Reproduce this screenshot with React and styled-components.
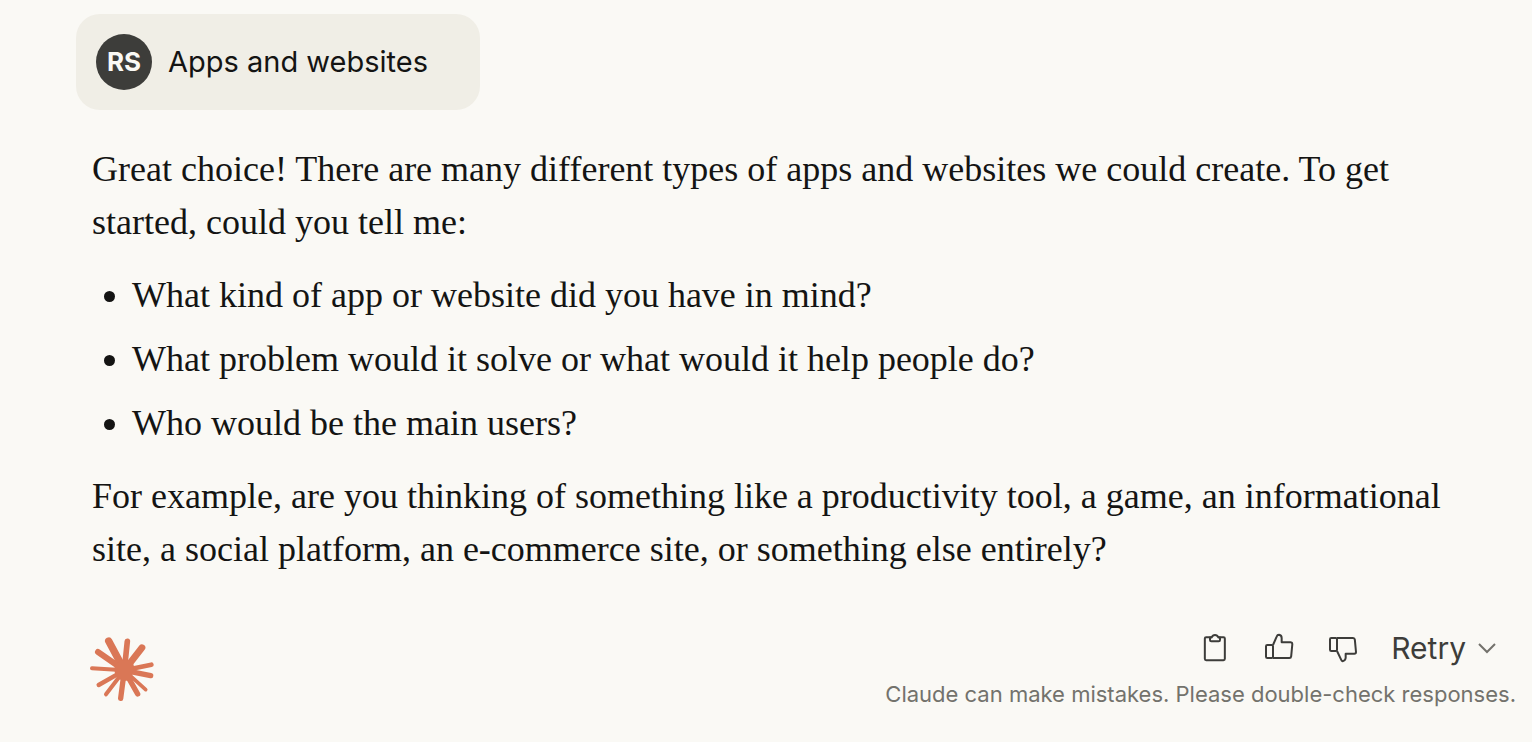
import React from "react";
import styled, { createGlobalStyle } from "styled-components";

const questions = [
  "What kind of app or website did you have in mind?",
  "What problem would it solve or what would it help people do?",
  "Who would be the main users?",
];

// tips of the logo rays, with the thickness of each ray
const rays = [
  { x: 86, y: 44, width: 22 },
  { x: 142, y: 45, width: 17 },
  { x: 186, y: 64, width: 20 },
  { x: 214, y: 115, width: 14 },
  { x: 212, y: 148, width: 16 },
  { x: 197, y: 190, width: 11 },
  { x: 173, y: 203, width: 16 },
  { x: 122, y: 216, width: 16 },
  { x: 78, y: 204, width: 12 },
  { x: 56, y: 176, width: 13 },
  { x: 36, y: 126, width: 12 },
  { x: 54, y: 77, width: 18 },
];

function Logo() {
  return (
    <LogoSvg viewBox="30 32 192 192" aria-hidden="true">
      {rays.map((ray) => (
        <line
          key={`${ray.x}-${ray.y}`}
          x1="133"
          y1="132"
          x2={ray.x}
          y2={ray.y}
          strokeWidth={ray.width}
        />
      ))}
      <path
        d="M122 102 L134 104 L156 102 L162 120 L158 140 L154 162 L130 164 L112 156 L104 138 L104 118 Z"
        fill="#da7756"
        stroke="none"
      />
    </LogoSvg>
  );
}

export default function App() {
  return (
    <Page>
      <GlobalStyle />
      <Prompt>
        <Avatar>RS</Avatar>
        <span>Apps and websites</span>
      </Prompt>
      <Answer>
        <p>
          Great choice! There are many different types of apps and websites we
          could create. To get started, could you tell me:
        </p>
        <ul>
          {questions.map((question) => (
            <li key={question}>{question}</li>
          ))}
        </ul>
        <p>
          For example, are you thinking of something like a productivity tool, a
          game, an informational site, a social platform, an e-commerce site, or
          something else entirely?
        </p>
      </Answer>
      <Footer>
        <Logo />
        <FooterRight>
          <Actions>
            <IconButton type="button" aria-label="Copy">
              <svg viewBox="30 36 96 96">
                <rect x="47.5" y="51.5" width="60" height="69" rx="4" />
                <path
                  d="M63 52.5 V60 Q63 64 67 64 H89 Q93 64 93 60 V52.5 H88 Q85 45 78 45 Q71 45 68 52.5 Z"
                  fill="#faf9f5"
                />
              </svg>
            </IconButton>
            <IconButton type="button" aria-label="Good response">
              <svg viewBox="222 36 96 96">
                <rect x="231" y="75" width="21" height="39" rx="4" />
                <path d="M252 75 L263 50 Q265 44.5 270 44.5 Q278 46 278 54 V66.5 H305 Q310 67 310 72 L306.500 109 Q306 114 301 114 H252" />
              </svg>
            </IconButton>
            <IconButton type="button" aria-label="Bad response">
              <svg viewBox="54 36 96 96">
                <rect x="63" y="54" width="21" height="39" rx="4" />
                <path d="M84 54 H132 Q137 54 137.500 59 L141 96 Q141 101 136 101 H110 V114 Q109 122 101 123.500 Q98 123 96 118 L84 93" />
              </svg>
            </IconButton>
            <RetryButton type="button">
              Retry
              <svg viewBox="0 0 18 18">
                <path d="M1 5 L9 13 L17 5" />
              </svg>
            </RetryButton>
          </Actions>
          <Disclaimer>
            Claude can make mistakes. Please double-check responses.
          </Disclaimer>
        </FooterRight>
      </Footer>
    </Page>
  );
}

const GlobalStyle = createGlobalStyle`
  * {
    box-sizing: border-box;
  }
  body {
    margin: 0;
    background: #faf9f5;
    color: #141413;
    font-family: Inter, "Liberation Sans", sans-serif;
  }
`;

const Page = styled.main`
  padding: 14px 16px 32px 76px;
`;

const Prompt = styled.div`
  display: flex;
  align-items: center;
  gap: 16px;
  width: fit-content;
  padding: 20px 52px 20px 20px;
  border-radius: 24px;
  background: #f0eee6;
  font-size: 29px;
  line-height: 56px;
`;

const Avatar = styled.span`
  display: flex;
  align-items: center;
  justify-content: center;
  width: 56px;
  height: 56px;
  border-radius: 50%;
  background: #3d3d3a;
  color: #faf9f5;
  font-size: 26px;
  font-weight: 700;
`;

const Answer = styled.div`
  display: flex;
  flex-direction: column;
  gap: 20px;
  padding: 33px 64px 0 16px;
  font-family: "Liberation Serif", serif;
  font-size: 36px;
  line-height: 53px;
  p {
    margin: 0;
  }
  ul {
    display: flex;
    flex-direction: column;
    gap: 11px;
    margin: 0;
    padding-left: 40px;
  }
`;

const Footer = styled.footer`
  display: flex;
  align-items: center;
  justify-content: space-between;
  margin-top: 54px;
  padding-left: 14px;
`;

const LogoSvg = styled.svg`
  width: 64px;
  height: 64px;
  stroke: #da7756;
  stroke-linecap: round;
`;

const FooterRight = styled.div`
  display: flex;
  flex-direction: column;
  align-items: flex-end;
  gap: 14px;
`;

const Actions = styled.div`
  display: flex;
  align-items: center;
  gap: 32px;
  padding-right: 20px;
`;

const IconButton = styled.button`
  width: 32px;
  height: 32px;
  padding: 0;
  border: 0;
  background: none;
  cursor: pointer;
  svg {
    display: block;
    fill: none;
    stroke: #3d3d3a;
    stroke-width: 6;
    stroke-linejoin: round;
  }
`;

const RetryButton = styled.button`
  display: flex;
  align-items: center;
  gap: 12px;
  padding: 0;
  border: 0;
  background: none;
  color: #3d3d3a;
  font-family: inherit;
  font-size: 30px;
  line-height: 36px;
  cursor: pointer;
  svg {
    width: 18px;
    height: 18px;
    fill: none;
    stroke: #73726c;
    stroke-width: 2;
  }
`;

const Disclaimer = styled.p`
  margin: 0;
  color: #73726c;
  font-size: 22px;
  line-height: 28px;
`;
